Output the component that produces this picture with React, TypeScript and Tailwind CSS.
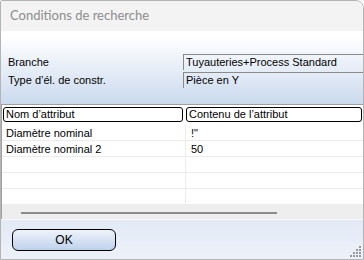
export default function App() {
  const rows = [
    { name: "Diamètre nominal", value: "!\"" },
    { name: "Diamètre nominal 2", value: "50" },
    { name: "", value: "" },
    { name: "", value: "" },
    { name: "", value: "" },
  ];

  return (
    <div className="flex h-[260px] w-[364px] flex-col overflow-hidden rounded-tl-[2px] rounded-tr-[8px] border border-[#b4b4b4] bg-white font-['Liberation_Sans',sans-serif] text-[11px] text-black">
      {/* title bar */}
      <div className="flex h-[30px] shrink-0 items-center bg-[#f3f3f3] px-[9px] font-['Lato',sans-serif] text-[13px] text-[#8d8d8d]">
        Conditions de recherche
      </div>

      {/* header fields */}
      <div className="grid h-[73px] shrink-0 grid-cols-[182px_1fr] content-start bg-gradient-to-b from-white from-[8%] to-[#cbdaee] pt-[23px]">
        <div className="flex h-[17px] items-center pl-[7px]">Branche</div>
        <div className="flex h-[16px] items-center border-t border-l border-[#8a8a8a] pl-[2px]">
          Tuyauteries+Process Standard
        </div>
        <div className="mt-px flex h-[17px] items-center pl-[7px]">
          Type d’él. de constr.
        </div>
        <div className="mt-px flex h-[16px] items-center border-t border-l border-[#8a8a8a] pl-[2px]">
          Pièce en Y
        </div>
      </div>

      {/* attribute table */}
      <div className="flex min-h-0 flex-1 flex-col border-t border-l border-[#a0a0a0] bg-white">
        <div className="flex h-[17px] shrink-0 gap-[3px] px-px pt-[2px]">
          <div className="flex w-[180px] items-center rounded-[3px] border border-black pl-[2px]">
            Nom d’attribut
          </div>
          <div className="flex flex-1 items-center rounded-[3px] border border-black pl-[2px]">
            Contenu de l’attribut
          </div>
        </div>
        <div className="mt-[3px] flex-1">
          {rows.map((r, i) => (
            <div
              key={i}
              className="grid h-[16px] grid-cols-[184px_1fr] border-b border-[#ececec]"
            >
              <div className="flex items-center border-r border-[#ececec] pl-[4px]">
                {r.name}
              </div>
              <div className="flex items-center pl-[5px]">{r.value}</div>
            </div>
          ))}
        </div>
        {/* horizontal scrollbar */}
        <div className="flex h-[17px] shrink-0 items-start bg-[#eeeeee] pt-[7px] pl-[19px]">
          <div className="h-[2px] w-[256px] bg-[#8c8c8c]" />
        </div>
      </div>

      {/* footer */}
      <div className="relative flex h-[40px] shrink-0 items-center border-t border-[#f6f8fc] bg-gradient-to-b from-[#e2eaf6] to-[#edf1f9] pl-[11px]">
        <button className="flex h-[22px] w-[104px] items-center justify-center rounded-[6px] border border-black bg-gradient-to-b from-[#eef3fa] to-[#bfd2ec] text-[12px]">
          OK
        </button>
        <svg
          className="absolute right-px bottom-px"
          width="14"
          height="14"
          viewBox="0 0 14 14"
        >
          {[
            [11, 2],
            [8, 5],
            [11, 5],
            [5, 8],
            [8, 8],
            [11, 8],
            [2, 11],
            [5, 11],
            [8, 11],
            [11, 11],
          ].map(([x, y], i) => (
            <rect key={i} x={x} y={y} width="2" height="2" fill="#9a9a9a" />
          ))}
        </svg>
      </div>
    </div>
  );
}
